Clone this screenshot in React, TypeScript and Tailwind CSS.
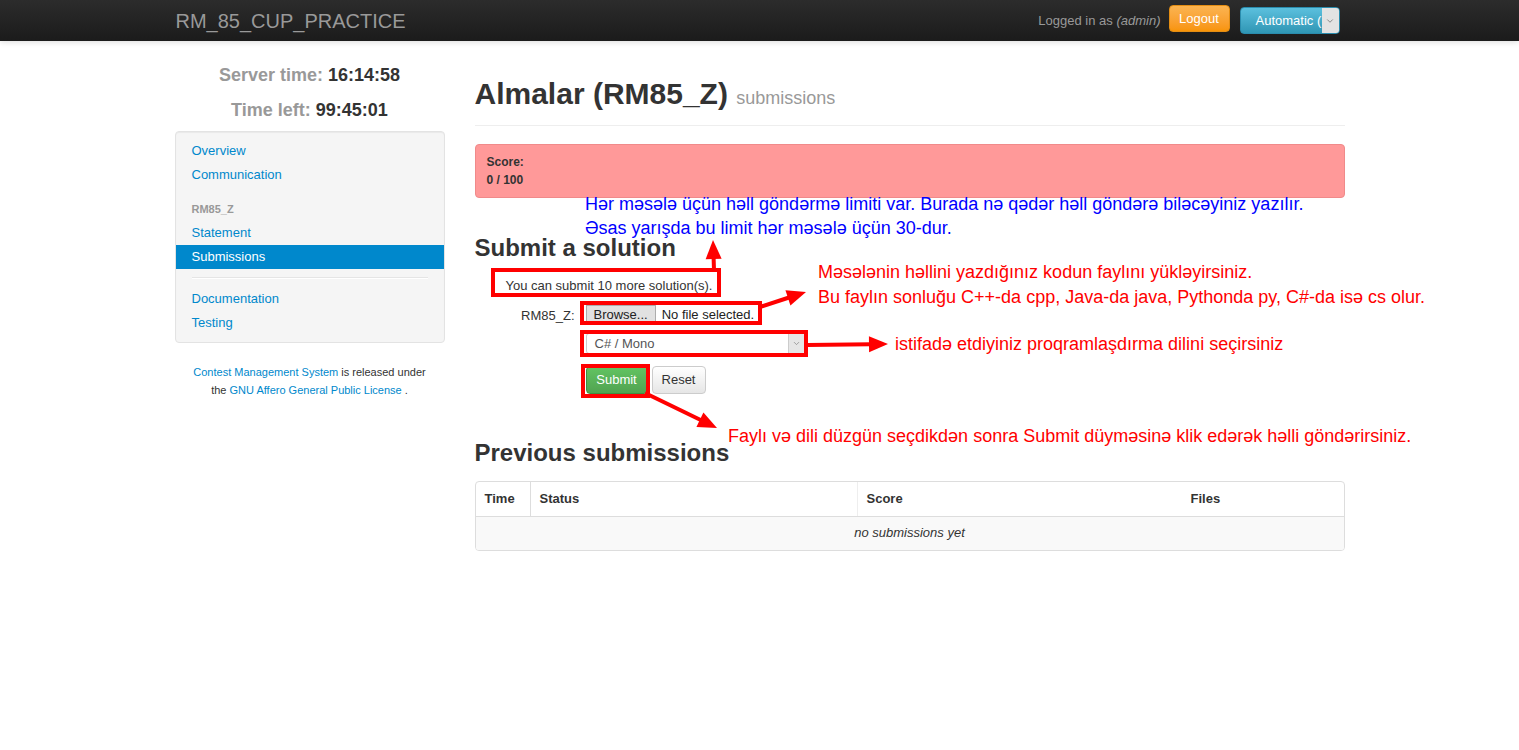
import { ChevronDown } from "lucide-react";

const navItems = [
  { label: "Overview" },
  { label: "Communication" },
];

function Arrow({ x1, y1, x2, y2 }: { x1: number; y1: number; x2: number; y2: number }) {
  const dx = x2 - x1;
  const dy = y2 - y1;
  const len = Math.hypot(dx, dy);
  const ux = dx / len;
  const uy = dy / len;
  const hl = 19;
  const hw = 8;
  const bx = x2 - ux * hl;
  const by = y2 - uy * hl;
  const pts = `${x2},${y2} ${bx - uy * hw},${by + ux * hw} ${bx + uy * hw},${by - ux * hw}`;
  return (
    <g>
      <line x1={x1} y1={y1} x2={bx + ux * 2} y2={by + uy * 2} stroke="#ff0000" strokeWidth={4} />
      <polygon points={pts} fill="#ff0000" />
    </g>
  );
}

export default function App() {
  return (
    <div className="relative min-h-[750px] bg-white font-['Liberation_Sans',Arial,sans-serif] text-[13px] text-[#333]">
      {/* Navbar */}
      <header className="h-[41px] bg-gradient-to-b from-[#2c2c2c] to-[#1b1b1b] shadow-[0_1px_6px_rgba(0,0,0,0.15)]">
        <div className="mx-auto flex h-full w-[1170px] items-center justify-between">
          <span className="pl-[1px] text-[20px] text-[#999]">RM_85_CUP_PRACTICE</span>
          <div className="flex items-center pr-[5px]">
            <span className="text-[13px] text-[#999]">
              Logged in as <i>(admin)</i>
            </span>
            <button className="ml-[8px] h-[27px] w-[61px] -translate-y-[2px] rounded-[4px] border border-[#e38d13] bg-gradient-to-b from-[#fbb450] to-[#f89406] text-[13px] text-white">
              Logout
            </button>
            <div className="ml-[10px] flex h-[27px] w-[100px] overflow-hidden rounded-[4px] border border-[#2a8cad] bg-gradient-to-b from-[#5bc0de] to-[#2f96b4]">
              <span className="flex-1 whitespace-nowrap pl-[15px] text-left text-[13px] leading-[26px] text-white">Automatic (</span>
              <span className="flex w-[17px] shrink-0 items-center justify-center bg-[#e3e3e3]">
                <ChevronDown className="h-[10px] w-[10px] text-[#777]" />
              </span>
            </div>
          </div>
        </div>
      </header>

      <div className="mx-auto flex w-[1170px] gap-[30px]">
        {/* Sidebar */}
        <aside className="w-[270px] shrink-0 pt-[22px]">
          <div className="text-center text-[18px] font-bold leading-[24px]">
            <span className="text-[#999]">Server time:</span> <span className="text-[#333]">16:14:58</span>
          </div>
          <div className="mt-[11px] text-center text-[18px] font-bold leading-[24px]">
            <span className="text-[#999]">Time left:</span> <span className="text-[#333]">99:45:01</span>
          </div>

          <nav className="mt-[9px] rounded-[4px] border border-[#e3e3e3] bg-[#f5f5f5] py-[7px] shadow-[inset_0_1px_1px_rgba(0,0,0,0.05)]">
            {navItems.map((item) => (
              <div key={item.label} className="px-[16px] leading-[24px] text-[#0088cc]">
                {item.label}
              </div>
            ))}
            <div className="mt-[10px] px-[16px] text-[11px] font-bold leading-[24px] text-[#999]">RM85_Z</div>
            <div className="px-[16px] leading-[24px] text-[#0088cc]">Statement</div>
            <div className="bg-[#0088cc] px-[16px] leading-[24px] text-white">Submissions</div>
            <div className="mx-[16px] my-[8px] h-[2px] border-t border-[#e5e5e5] bg-white" />
            <div className="px-[16px] leading-[24px] text-[#0088cc]">Documentation</div>
            <div className="px-[16px] leading-[24px] text-[#0088cc]">Testing</div>
          </nav>

          <p className="mt-[20px] text-center text-[11px] leading-[18px] text-[#333]">
            <span className="text-[#0088cc]">Contest Management System</span> is released under
            <br />
            the <span className="text-[#0088cc]">GNU Affero General Public License</span> .
          </p>
        </aside>

        {/* Main */}
        <main className="w-[870px] pt-[33px]">
          <div className="border-b border-[#eee] pb-[11px]">
            <h1 className="h-[40px] text-[30px] font-bold leading-[40px] text-[#333]">
              Almalar (RM85_Z) <small className="text-[18px] font-normal leading-none text-[#999]">submissions</small>
            </h1>
          </div>

          <div className="mt-[18px] rounded-[4px] border border-[#f08a8a] bg-[#ff9999] py-[8px] pl-[11px] text-[12px] font-bold leading-[18px] text-[#333]">
            <div>Score:</div>
            <div>0 / 100</div>
          </div>

          <h2 className="mt-[35px] text-[24px] font-bold leading-[30px]">Submit a solution</h2>
          <p className="mt-[13px] pl-[31px] leading-[20px]">You can submit 10 more solution(s).</p>

          <div className="mt-[7px] flex items-center">
            <label className="w-[100px] pt-[3px] text-right">RM85_Z:</label>
            <div className="ml-[11px] flex items-center">
              <span className="h-[19px] border border-[#adadad] bg-[#e1e1e1] px-[7px] leading-[17px] text-[#222]">
                Browse...
              </span>
              <span className="ml-[6px] text-[#222]">No file selected.</span>
            </div>
          </div>

          <div className="ml-[111px] mt-[7px] flex h-[21px] w-[220px] overflow-hidden rounded-[3px] border border-[#ccc]">
            <span className="flex-1 pl-[8px] leading-[19px] text-[#555]">C# / Mono</span>
            <span className="flex w-[17px] items-center justify-center border-l border-[#ccc] bg-[#e6e6e6]">
              <ChevronDown className="h-[9px] w-[9px] text-[#888]" />
            </span>
          </div>

          <div className="ml-[111px] mt-[12px] flex gap-[4px]">
            <button className="h-[28px] w-[62px] rounded-[4px] border border-[#3f8e3f] bg-gradient-to-b from-[#62c462] to-[#51a351] text-[13px] text-white">
              Submit
            </button>
            <button className="h-[28px] w-[54px] rounded-[4px] border border-[#ccc] bg-gradient-to-b from-white to-[#e6e6e6] text-[13px] text-[#333]">
              Reset
            </button>
          </div>

          <h2 className="mt-[44px] text-[24px] font-bold leading-[30px]">Previous submissions</h2>

          <div className="mt-[13px] overflow-hidden rounded-[4px] border border-[#ddd]">
            <div className="flex h-[34px] items-center font-bold">
              <div className="flex h-full w-[55px] items-center border-r border-[#ddd] pl-[9px]">Time</div>
              <div className="flex h-full w-[326px] items-center pl-[9px]">Status</div>
              <div className="flex h-full w-[325px] items-center border-l border-[#eee] pl-[9px]">Score</div>
              <div className="flex h-full flex-1 items-center pl-[9px]">Files</div>
            </div>
            <div className="flex h-[34px] items-center justify-center border-t border-[#ddd] bg-[#f9f9f9] italic">
              no submissions yet
            </div>
          </div>
        </main>
      </div>

      {/* Annotation overlay */}
      <svg className="pointer-events-none absolute left-0 top-0" width={1519} height={750}>
        <rect x={493} y={270} width={226} height={25} fill="none" stroke="#ff0000" strokeWidth={4} />
        <rect x={582} y={303} width={178} height={20} fill="none" stroke="#ff0000" strokeWidth={4} />
        <rect x={582} y={332} width={224} height={23} fill="none" stroke="#ff0000" strokeWidth={4} />
        <rect x={583} y={366} width={65} height={30} fill="none" stroke="#ff0000" strokeWidth={4} />
        <Arrow x1={714} y1={270} x2={713} y2={240} />
        <Arrow x1={760} y1={307} x2={806} y2={292} />
        <Arrow x1={807} y1={345} x2={888} y2={344} />
        <Arrow x1={645} y1={393} x2={717} y2={428} />
      </svg>

      <div className="pointer-events-none absolute left-[585px] top-[192px] whitespace-nowrap text-[18px] leading-[24px] text-[#0000ff]">
        Hər məsələ üçün həll göndərmə limiti var. Burada nə qədər həll göndərə biləcəyiniz yazılır.
        <br />
        Əsas yarışda bu limit hər məsələ üçün 30-dur.
      </div>
      <div className="pointer-events-none absolute left-[818px] top-[260px] whitespace-nowrap text-[18px] leading-[25px] text-[#ff0000]">
        Məsələnin həllini yazdığınız kodun faylını yükləyirsiniz.
        <br />
        Bu faylın sonluğu C++-da cpp, Java-da java, Pythonda py, C#-da isə cs olur.
      </div>
      <div className="pointer-events-none absolute left-[895px] top-[332px] whitespace-nowrap text-[18px] leading-[24px] text-[#ff0000]">
        istifadə etdiyiniz proqramlaşdırma dilini seçirsiniz
      </div>
      <div className="pointer-events-none absolute left-[728px] top-[424px] whitespace-nowrap text-[18px] leading-[24px] text-[#ff0000]">
        Faylı və dili düzgün seçdikdən sonra Submit düyməsinə klik edərək həlli göndərirsiniz.
      </div>
    </div>
  );
}
